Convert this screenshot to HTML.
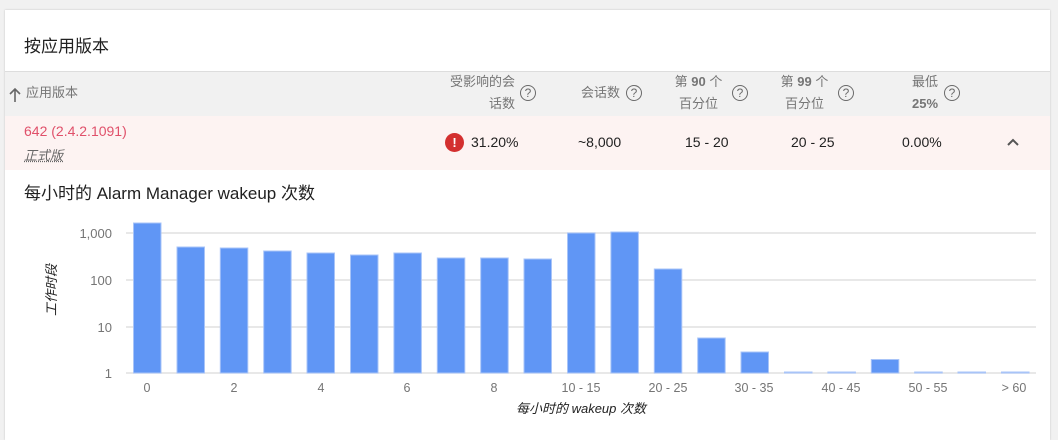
<!DOCTYPE html>
<html><head><meta charset="utf-8"><style>
body{margin:0;width:1058px;height:436px;background:#f1f1f1;font-family:"Liberation Sans","Noto Sans CJK SC",sans-serif;position:relative;overflow:hidden}
.card{position:absolute;left:5px;top:10px;width:1045px;height:430px;background:#fff;box-shadow:0 0 2px rgba(0,0,0,.2)}
.a{position:absolute}
.h{color:#757575;font-size:13px;text-align:right;line-height:22px}
.q{display:inline-block;width:14px;height:14px;border:1.8px solid #6a6a6a;border-radius:50%;font-size:12px;line-height:14px;text-align:center;color:#6a6a6a}
.c{font-size:14px;color:#212121}
</style></head><body>
<div class="card">
<div class="a" style="left:19px;top:22px;font-size:17px;color:#212121">按应用版本</div>
<div class="a" style="left:0;top:61px;width:1045px;height:44px;background:#f1f1f1;border-top:1px solid #ddd;border-bottom:1px solid #ddd"></div>
<div class="a" style="left:0;top:106px;width:1045px;height:54px;background:#fdf3f2"></div>
<svg class="a" style="left:3px;top:77px" width="14" height="16"><path d="M7 2V15M2 7L7 2L12 7" stroke="#666" stroke-width="1.6" fill="none"/></svg>
<div class="a h" style="left:21px;top:72px;text-align:left">应用版本</div>
<div class="a h" style="left:430px;top:61px;width:80px">受影响的会<br>话数</div><div class="a q" style="left:515px;top:75px">?</div>
<div class="a h" style="left:560px;top:72px;width:55px">会话数</div><div class="a q" style="left:621px;top:75px">?</div>
<div class="a h" style="left:660px;top:61px;width:67px;text-align:center">第 <b>90</b> 个<br>百分位</div><div class="a q" style="left:727px;top:75px">?</div>
<div class="a h" style="left:766px;top:61px;width:67px;text-align:center">第 <b>99</b> 个<br>百分位</div><div class="a q" style="left:833px;top:75px">?</div>
<div class="a h" style="left:895px;top:61px;width:50px;text-align:center">最低<br><b>25%</b></div><div class="a q" style="left:939px;top:75px">?</div>
<div class="a" style="left:19px;top:113px;font-size:14px;color:#e0506a">642 (2.4.2.1091)</div>
<div class="a" style="left:19px;top:135px;font-size:13px;color:#666;font-style:italic;text-decoration:underline dotted">正式版</div>
<div class="a" style="left:440px;top:123px;width:19px;height:19px;border-radius:50%;background:#d32f2f;color:#fff;font-size:13px;font-weight:bold;text-align:center;line-height:19px">!</div>
<div class="a c" style="left:466px;top:124px">31.20%</div>
<div class="a c" style="left:573px;top:124px">~8,000</div>
<div class="a c" style="left:680px;top:124px">15 - 20</div>
<div class="a c" style="left:786px;top:124px">20 - 25</div>
<div class="a c" style="left:897px;top:124px">0.00%</div>
<svg class="a" style="left:1001px;top:127px" width="14" height="10"><path d="M2 8L7 3L12 8" stroke="#555" stroke-width="2" fill="none"/></svg>
<div class="a" style="left:19px;top:169px;font-size:17px;color:#212121">每小时的 Alarm Manager wakeup 次数</div>
</div>
<svg class="a" style="left:0;top:0" width="1058" height="436" font-family="Liberation Sans,Noto Sans CJK SC,sans-serif">
<g stroke="#e0e0e0" stroke-width="1.5"><line x1="126" x2="1036" y1="233" y2="233"/><line x1="126" x2="1036" y1="280" y2="280"/><line x1="126" x2="1036" y1="327" y2="327"/><line x1="126" x2="1036" y1="373" y2="373"/></g>
<g fill="#757575" font-size="13" text-anchor="end"><text x="112" y="238">1,000</text><text x="112" y="285">100</text><text x="112" y="332">10</text><text x="112" y="378">1</text></g>
<g fill="#6096f5" stroke="#a8c4f8" stroke-width="1">
<rect x="133.5" y="223" width="27.5" height="150"/><rect x="177" y="247" width="27.5" height="126"/><rect x="220.3" y="248" width="27.5" height="125"/><rect x="263.7" y="251" width="27.5" height="122"/><rect x="307" y="253" width="27.5" height="120"/><rect x="350.5" y="255" width="27.5" height="118"/><rect x="393.9" y="253" width="27.5" height="120"/><rect x="437.3" y="258" width="27.5" height="115"/><rect x="480.7" y="258" width="27.5" height="115"/><rect x="524" y="259" width="27.5" height="114"/><rect x="567.5" y="233" width="27.5" height="140"/><rect x="610.9" y="232" width="27.5" height="141"/><rect x="654.3" y="269" width="27.5" height="104"/><rect x="697.7" y="338" width="27.5" height="35"/><rect x="741" y="352" width="27.5" height="21"/><rect x="784.5" y="372" width="27.5" height="1"/><rect x="827.9" y="372" width="27.5" height="1"/><rect x="871.3" y="359.5" width="27.5" height="13.5"/><rect x="914.7" y="372" width="27.5" height="1"/><rect x="958" y="372" width="27.5" height="1"/><rect x="1001.5" y="372" width="27.5" height="1"/>
</g>
<g fill="#757575" font-size="12.5" text-anchor="middle"><text x="147" y="392">0</text><text x="234" y="392">2</text><text x="321" y="392">4</text><text x="407" y="392">6</text><text x="494" y="392">8</text><text x="581" y="392">10 - 15</text><text x="668" y="392">20 - 25</text><text x="754" y="392">30 - 35</text><text x="841" y="392">40 - 45</text><text x="928" y="392">50 - 55</text><text x="1014" y="392">&gt; 60</text></g>
<text x="581" y="413" font-size="13" font-style="italic" fill="#222" text-anchor="middle">每小时的 wakeup 次数</text>
<text transform="translate(56,290) rotate(-90)" font-size="13" font-style="italic" fill="#222" text-anchor="middle">工作时段</text>
</svg>
</body></html>
